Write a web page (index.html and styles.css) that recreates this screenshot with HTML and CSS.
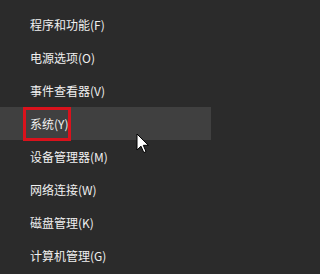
FILE: index.html
```html
<!DOCTYPE html>
<html lang="zh-CN">
<head>
<meta charset="utf-8">
<link rel="stylesheet" href="styles.css">
</head>
<body>
<ul class="menu">
  <li class="item">程序和功能(F)</li>
  <li class="item">电源选项(O)</li>
  <li class="item">事件查看器(V)</li>
  <li class="item item-hover"><span class="mark"></span>系统(Y)</li>
  <li class="item">设备管理器(M)</li>
  <li class="item">网络连接(W)</li>
  <li class="item">磁盘管理(K)</li>
  <li class="item">计算机管理(G)</li>
</ul>
<svg class="cursor" width="14" height="22" viewBox="0 0 14 22">
  <path d="M1 1 L1 17 L5 13.2 L7.8 19.6 L10 18.6 L7.3 12.3 L12.4 12.3 Z" fill="#fff" stroke="#000" stroke-width="1" stroke-linejoin="miter"/>
</svg>
</body>
</html>
```
FILE: styles.css
```css
html, body {
  margin: 0;
  padding: 0;
  background: #2b2b2b;
  width: 211px;
  height: 274px;
  overflow: hidden;
}
body {
  position: relative;
  font-family: "Noto Sans CJK SC", "Microsoft YaHei", sans-serif;
  font-size: 12px;
  color: #f0f0f0;
}
.menu {
  list-style: none;
  margin: 0;
  padding: 8px 0 0 0;
}
.item {
  position: relative;
  height: 33px;
  line-height: 33px;
  padding-left: 30px;
  white-space: nowrap;
}
.item-hover {
  background: #404040;
}
.mark {
  position: absolute;
  left: 23px;
  top: 0;
  width: 48px;
  height: 34px;
  box-sizing: border-box;
  border: 3px solid #d9121c;
}
.cursor {
  position: absolute;
  left: 136px;
  top: 133px;
}
```
